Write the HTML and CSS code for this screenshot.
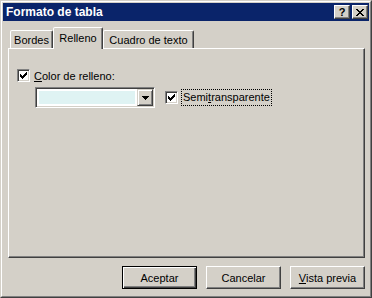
FILE: index.html
```
<!DOCTYPE html>
<html lang="es">
<head>
<meta charset="utf-8">
<title>Formato de tabla</title>
<link rel="stylesheet" href="styles.css">
</head>
<body>
<div class="window">
  <div class="frame">
    <div class="titlebar">
      <span class="title">Formato de tabla</span>
      <div class="caption-buttons">
        <span class="cap-btn help">?</span>
        <span class="cap-btn close">
          <svg width="8" height="7" viewBox="0 0 8 7" shape-rendering="crispEdges"><path d="M0 0h2v1H0zM6 0h2v1H6zM1 1h2v1H1zM5 1h2v1H5zM2 2h4v1H2zM3 3h2v1H3zM2 4h4v1H2zM1 5h2v1H1zM5 5h2v1H5zM0 6h2v1H0zM6 6h2v1H6z" fill="#000"/></svg>
        </span>
      </div>
    </div>
    <div class="body">
      <div class="tabs">
        <div class="tab tab-bordes">Bordes</div>
        <div class="tab tab-relleno active">Relleno</div>
        <div class="tab tab-cuadro">Cuadro de texto</div>
      </div>
      <div class="panel">
        <div class="row">
          <span class="checkbox">
            <svg width="7" height="7" viewBox="0 0 7 7" shape-rendering="crispEdges"><path d="M6 0h1v1H6zM5 1h2v1H5zM0 2h1v1H0zM4 2h3v1H4zM0 3h2v1H0zM3 3h3v1H3zM0 4h5v1H0zM1 5h3v1H1zM2 6h1v1H2z" fill="#000"/></svg>
          </span>
          <span class="label"><u>C</u>olor de relleno:</span>
        </div>
        <div class="row row-combo">
          <div class="combo">
            <div class="combo-field"><div class="swatch"></div></div>
            <div class="combo-btn">
              <svg width="7" height="4" viewBox="0 0 7 4" shape-rendering="crispEdges"><path d="M0 0h7v1H0zM1 1h5v1H1zM2 2h3v1H2zM3 3h1v1H3z" fill="#000"/></svg>
            </div>
          </div>
          <span class="checkbox checkbox-semi">
            <svg width="7" height="7" viewBox="0 0 7 7" shape-rendering="crispEdges"><path d="M6 0h1v1H6zM5 1h2v1H5zM0 2h1v1H0zM4 2h3v1H4zM0 3h2v1H0zM3 3h3v1H3zM0 4h5v1H0zM1 5h3v1H1zM2 6h1v1H2z" fill="#000"/></svg>
          </span>
          <span class="label focus">Semi<u>t</u>ransparente</span>
        </div>
      </div>
      <div class="buttons">
        <button class="btn default">Aceptar</button>
        <button class="btn">Cancelar</button>
        <button class="btn"><u>V</u>ista previa</button>
      </div>
    </div>
  </div>
</div>
</body>
</html>
```
FILE: styles.css
```
body {
  margin: 0;
  font-family: "Liberation Sans", Arial, sans-serif;
  font-size: 11px;
  color: #000;
}

.window {
  width: 372px;
  height: 298px;
  box-sizing: border-box;
  border: 1px solid;
  border-color: #d4d0c8 #404040 #404040 #d4d0c8;
  background: #d4d0c8;
}

.frame {
  height: 100%;
  box-sizing: border-box;
  border: 1px solid;
  border-color: #fff #808080 #808080 #fff;
  padding: 1px;
  display: flex;
  flex-direction: column;
}

.titlebar {
  height: 18px;
  flex: none;
  background: #0a246a;
  display: flex;
  align-items: center;
  justify-content: space-between;
  padding: 0 1px 0 3px;
}

.title {
  color: #fff;
  font-weight: bold;
  font-size: 12px;
}

.caption-buttons {
  display: flex;
  gap: 2px;
}

.cap-btn {
  width: 16px;
  height: 14px;
  box-sizing: border-box;
  background: #d4d0c8;
  border: 1px solid;
  border-color: #fff #404040 #404040 #fff;
  box-shadow: inset -1px -1px #808080;
  display: flex;
  align-items: center;
  justify-content: center;
  font-weight: bold;
  font-size: 11px;
  line-height: 1;
}

.cap-btn svg {
  display: block;
}

.body {
  flex: 1;
  padding: 6px 4px 0 5px;
  display: flex;
  flex-direction: column;
}

.tabs {
  display: flex;
  align-items: flex-end;
  height: 21px;
  padding-left: 2px;
  position: relative;
  z-index: 1;
}

.tab {
  height: 18px;
  box-sizing: border-box;
  border: 1px solid;
  border-bottom: none;
  border-color: #fff #404040 transparent #fff;
  box-shadow: inset -1px 0 #808080;
  border-radius: 2px 2px 0 0;
  display: flex;
  align-items: center;
  justify-content: center;
  background: #d4d0c8;
}

.tab.active {
  height: 22px;
  margin-bottom: -1px;
  padding-bottom: 2px;
}

.tab-bordes { width: 43px; }
.tab-relleno { width: 50px; }
.tab-cuadro { width: 91px; }

.panel {
  height: 210px;
  flex: none;
  box-sizing: border-box;
  border: 1px solid;
  border-color: #fff #404040 #404040 #fff;
  box-shadow: inset -1px -1px #808080;
  padding: 20px 8px 0 8px;
}

.row {
  display: flex;
  align-items: center;
}

.row-combo {
  margin-top: 5px;
  margin-left: 18px;
}

.checkbox {
  width: 13px;
  height: 13px;
  flex: none;
  box-sizing: border-box;
  border: 1px solid;
  border-color: #808080 #fff #fff #808080;
  box-shadow: inset 1px 1px #404040, inset -1px -1px #d4d0c8;
  background: #fff;
}

.checkbox svg {
  display: block;
  margin: 2px;
}

.label {
  margin-left: 4px;
}

.combo {
  width: 120px;
  height: 21px;
  flex: none;
  box-sizing: border-box;
  border: 1px solid;
  border-color: #808080 #fff #fff #808080;
  box-shadow: inset 1px 1px #404040, inset -1px -1px #d4d0c8;
  background: #fff;
  padding: 1px;
  display: flex;
}

.combo-field {
  flex: 1;
  padding: 2px;
}

.swatch {
  height: 100%;
  background: #dff3f3;
}

.combo-btn {
  width: 16px;
  height: 17px;
  box-sizing: border-box;
  border: 1px solid;
  border-color: #d4d0c8 #404040 #404040 #d4d0c8;
  box-shadow: inset 1px 1px #fff, inset -1px -1px #808080;
  background: #d4d0c8;
  display: flex;
  align-items: center;
  justify-content: center;
}

.combo-btn svg {
  display: block;
}

.checkbox-semi {
  margin-left: 10px;
}

.label.focus {
  margin-left: 3px;
  border: 1px dotted #000;
  padding: 1px 1px 2px;
}

.buttons {
  display: flex;
  justify-content: flex-end;
  gap: 9px;
  margin-top: 8px;
}

.btn {
  width: 75px;
  height: 23px;
  box-sizing: border-box;
  font: inherit;
  color: #000;
  background: #d4d0c8;
  border: 1px solid;
  border-color: #fff #404040 #404040 #fff;
  box-shadow: inset -1px -1px #808080;
  padding: 0;
}

.btn.default {
  border-color: #000;
  box-shadow: inset 1px 1px #fff, inset -1px -1px #404040, inset -2px -2px #808080;
}
```
